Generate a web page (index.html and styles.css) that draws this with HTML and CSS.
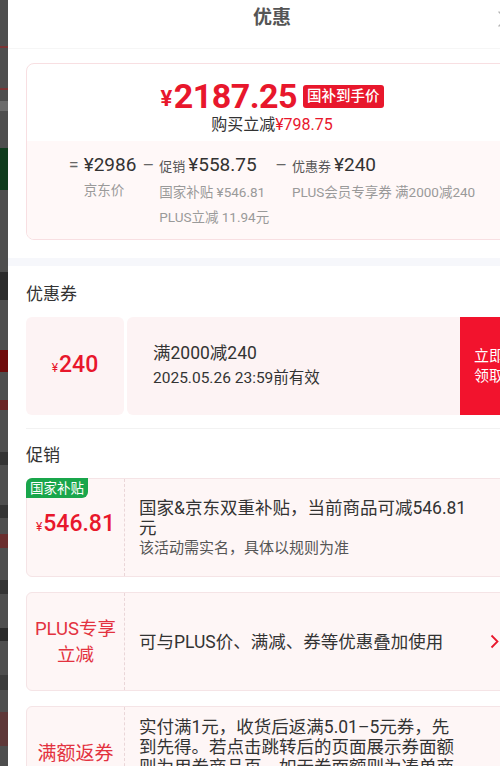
FILE: index.html
```html
<!DOCTYPE html>
<html lang="zh-CN">
<head>
  <meta charset="UTF-8">
  <meta name="viewport" content="width=device-width, initial-scale=1.0">
  <title>优惠</title>
  <link rel="stylesheet" href="styles.css">
</head>
<body>
  <div class="backdrop"></div>

  <div class="sheet">
    <div class="sheet-header">
      <h1>优惠</h1>
      <svg class="close" width="18" height="18" viewBox="0 0 18 18">
        <path d="M2 2 L16 16 M16 2 L2 16" stroke="#b5b5b5" stroke-width="1.4" fill="none" stroke-linecap="round"/>
      </svg>
    </div>

    <div class="summary">
      <div class="summary-top">
        <div class="final-price">
          <span class="yen">¥</span>2187.25<span class="price-tag">国补到手价</span>
        </div>
        <div class="saved">购买立减<em>¥798.75</em></div>
      </div>
      <div class="summary-detail">
        <div class="calc-col">
          <span class="op">=</span>
          <div>
            <div class="calc-main">¥2986</div>
            <div class="calc-sub">京东价</div>
          </div>
        </div>
        <div class="calc-col">
          <span class="op">–</span>
          <div>
            <div class="calc-main"><span class="calc-label">促销</span>¥558.75</div>
            <div class="calc-sub">国家补贴 ¥546.81</div>
            <div class="calc-sub">PLUS立减 11.94元</div>
          </div>
        </div>
        <div class="calc-col">
          <span class="op">–</span>
          <div>
            <div class="calc-main"><span class="calc-label">优惠券</span>¥240</div>
            <div class="calc-sub">PLUS会员专享券 满2000减240</div>
          </div>
        </div>
      </div>
    </div>

    <div class="band"></div>

    <section class="block">
      <h2>优惠券</h2>
      <div class="coupon">
        <div class="coupon-value"><span class="small-yen">¥</span>240</div>
        <div class="coupon-info">
          <div class="coupon-rule">满2000减240</div>
          <div class="coupon-date">2025.05.26 23:59前有效</div>
        </div>
        <div class="coupon-btn">立即<br>领取</div>
      </div>
    </section>

    <div class="rule"></div>

    <section class="block">
      <h2>促销</h2>

      <div class="promo">
        <span class="promo-flag">国家补贴</span>
        <div class="promo-label price"><span class="small-yen">¥</span>546.81</div>
        <div class="promo-text">
          <div>国家&amp;京东双重补贴，当前商品可减546.81元</div>
          <div class="promo-note">该活动需实名，具体以规则为准</div>
        </div>
      </div>

      <div class="promo">
        <div class="promo-label">PLUS专享<br>立减</div>
        <div class="promo-text">
          <div>可与PLUS价、满减、券等优惠叠加使用</div>
        </div>
        <svg class="promo-arrow" width="9" height="15" viewBox="0 0 9 15">
          <path d="M1.5 1.5 L7.5 7.5 L1.5 13.5" stroke="#e8172c" stroke-width="1.8" fill="none"/>
        </svg>
      </div>

      <div class="promo">
        <div class="promo-label big">满额返券</div>
        <div class="promo-text">
          <div>实付满1元，收货后返满5.01–5元券，先<br>到先得。若点击跳转后的页面展示券面额则为用券商品页，如无券面额则为凑单商品页</div>
        </div>
      </div>
    </section>
  </div>
</body>
</html>
```

FILE: styles.css
```css
* {
  box-sizing: border-box;
}

html, body {
  margin: 0;
  padding: 0;
  height: 100%;
  overflow: hidden;
}

body {
  display: flex;
  font-family: Roboto, "Noto Sans CJK SC", sans-serif;
  color: #333;
  background: #4e4e4e;
}

/* dimmed page behind the sheet */
.backdrop {
  width: 8px;
  flex-shrink: 0;
  background: linear-gradient(to bottom,
    #4e4e4e 0 46px, #7a3434 46px 48px, #4e4e4e 48px 88px, #7a3434 88px 90px,
    #4e4e4e 90px 101px, #6c6c6c 101px 111px, #4e4e4e 111px 148px,
    #0f3b1d 148px 190px, #4e4e4e 190px 272px, #2c2c2c 272px 300px,
    #4e4e4e 300px 350px, #6e0b0b 350px 372px, #4e4e4e 372px 400px,
    #6a2626 400px 410px, #4e4e4e 410px 452px, #343434 452px 465px,
    #4e4e4e 465px 505px, #343434 505px 518px, #4e4e4e 518px 534px,
    #6a2e2e 534px 548px, #4e4e4e 548px 580px, #343434 580px 594px,
    #4e4e4e 594px 628px, #2a2a2a 628px 641px, #4e4e4e 641px 675px,
    #3c3c3c 675px 690px, #4e4e4e 690px 712px, #5e3838 712px 746px,
    #4e4e4e 746px);
}

.sheet {
  width: 528px;
  flex-shrink: 0;
  background: #fff;
}

.sheet-header {
  position: relative;
  height: 49px;
  border-bottom: 1px solid #f6f6f6;
  text-align: center;
}

.sheet-header h1 {
  margin: 0;
  font-size: 19px;
  line-height: 36px;
  font-weight: 700;
  color: #555;
}

.close {
  position: absolute;
  left: 489px;
  top: 10px;
}

/* price summary */
.summary {
  margin: 14px 18px 0;
  border: 1px solid #f8dfe2;
  border-radius: 8px;
  overflow: hidden;
}

.summary-top {
  padding: 13px 0 6px;
  text-align: center;
}

.final-price {
  display: flex;
  justify-content: center;
  align-items: center;
  height: 38px;
  color: #e8172c;
  font-size: 34px;
  font-weight: 700;
  letter-spacing: -0.5px;
}

.yen {
  font-size: 22px;
  margin-right: 2px;
  align-self: flex-end;
  line-height: 32px;
}

.price-tag {
  margin-left: 6px;
  padding: 0 4px;
  background: #e8172c;
  color: #fff;
  border-radius: 3px;
  font-size: 14.5px;
  font-weight: 500;
  line-height: 23px;
  letter-spacing: 0;
}

.saved {
  font-size: 16px;
  line-height: 20px;
}

.saved em {
  font-style: normal;
  color: #e8172c;
}

.summary-detail {
  display: flex;
  justify-content: center;
  gap: 6px;
  padding: 11px 0 9px;
  background: #fff8f8;
}

.calc-col {
  display: flex;
  align-items: flex-start;
}

.op {
  font-size: 18px;
  line-height: 26px;
  color: #666;
  margin-right: 5px;
}

.calc-main {
  font-size: 19px;
  line-height: 26px;
  white-space: nowrap;
}

.calc-label {
  font-size: 13px;
  color: #555;
  margin-right: 3px;
}

.calc-sub {
  font-size: 13.5px;
  line-height: 25px;
  color: #9a9a9a;
  white-space: nowrap;
}

.band {
  height: 8px;
  margin-top: 18px;
  background: #f6f7fb;
}

/* sections */
.block {
  padding: 0 18px;
}

.block h2 {
  margin: 0;
  padding: 16px 0 11px;
  font-size: 17px;
  font-weight: 400;
  line-height: 24px;
  color: #333;
}

.rule {
  height: 1px;
  margin: 13px 18px 0;
  background: #f2f2f2;
}

.rule + .block h2 {
  padding-top: 14px;
}

.small-yen {
  font-size: 12px;
  font-weight: 400;
  margin-right: 1px;
}

/* coupon */
.coupon {
  display: flex;
  height: 98px;
}

.coupon-value {
  width: 98px;
  display: flex;
  align-items: baseline;
  justify-content: center;
  padding-top: 34px;
  background: #fdf3f4;
  border-radius: 6px;
  color: #e8172c;
  font-size: 23px;
  font-weight: 500;
}

.coupon-info {
  flex: 1;
  margin-left: 3px;
  padding-left: 26px;
  display: flex;
  flex-direction: column;
  justify-content: center;
  background: #fdf3f4;
  border-radius: 6px 0 0 6px;
}

.coupon-rule {
  font-size: 17.5px;
  line-height: 25px;
}

.coupon-date {
  font-size: 15.5px;
  line-height: 25px;
}

.coupon-btn {
  width: 58px;
  padding-left: 14px;
  display: flex;
  align-items: center;
  background: #f2132d;
  color: #fff;
  border-radius: 0 6px 6px 0;
  font-size: 15px;
  line-height: 20px;
}

/* promotions */
.promo {
  position: relative;
  display: flex;
  min-height: 99px;
  margin-bottom: 15px;
  background: #fef6f6;
  border: 1px solid #f5e4e6;
  border-radius: 6px;
}

.promo-flag {
  position: absolute;
  left: -1px;
  top: -1px;
  padding: 0 4px;
  background: #19a64b;
  color: #fff;
  font-size: 13.5px;
  line-height: 20px;
  border-radius: 6px 0 6px 0;
}

.promo-label {
  width: 98px;
  flex-shrink: 0;
  display: flex;
  align-items: center;
  justify-content: center;
  text-align: center;
  border-right: 1px dashed #ead6d8;
  color: #e3323f;
  font-size: 18.5px;
  line-height: 26px;
}

.promo-label.price {
  align-items: baseline;
  padding-top: 32px;
  color: #e8172c;
  font-size: 23px;
  font-weight: 500;
}

.promo-label.big {
  font-size: 19px;
  padding-bottom: 6px;
}

.promo-text {
  flex: 1;
  display: flex;
  flex-direction: column;
  justify-content: center;
  padding: 10px 48px 10px 14px;
  font-size: 17.5px;
  line-height: 20px;
}

.promo-note {
  font-size: 15px;
  color: #555;
}

.promo-arrow {
  flex-shrink: 0;
  align-self: center;
  margin-right: 18px;
  margin-left: -27px;
}
```
